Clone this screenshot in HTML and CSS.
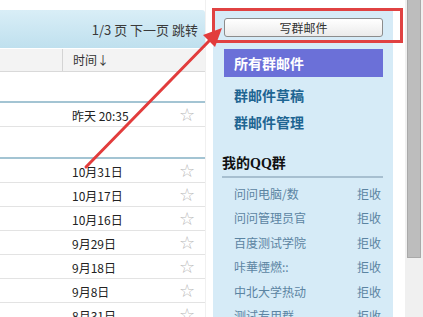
FILE: index.html
```html
<!doctype html>
<html lang="zh-CN">
<head>
    <meta charset="UTF-8" />
    <title>群邮件</title>
    <link rel="stylesheet" href="styles.css">
</head>
<body>
<div class="page">
    <div class="mail">
        <div class="pager">1/3 页 下一页 跳转</div>
        <div class="colhead">
            <span class="col-subject"></span>
            <span class="col-time">时间↓</span>
        </div>
        <div class="group">
            <div class="row"><span></span><span class="time">昨天 20:35</span><span class="star">☆</span></div>
        </div>
        <div class="group">
            <div class="row"><span></span><span class="time">10月31日</span><span class="star">☆</span></div>
            <div class="row"><span></span><span class="time">10月17日</span><span class="star">☆</span></div>
            <div class="row"><span></span><span class="time">10月16日</span><span class="star">☆</span></div>
            <div class="row"><span></span><span class="time">9月29日</span><span class="star">☆</span></div>
            <div class="row"><span></span><span class="time">9月18日</span><span class="star">☆</span></div>
            <div class="row"><span></span><span class="time">9月8日</span><span class="star">☆</span></div>
            <div class="row"><span></span><span class="time">8月31日</span><span class="star">☆</span></div>
        </div>
    </div>
    <aside class="side">
        <button type="button" class="write">写群邮件</button>
        <a class="nav nav-active">所有群邮件</a>
        <a class="nav">群邮件草稿</a>
        <a class="nav">群邮件管理</a>
        <h3 class="side-title">我的QQ群</h3>
        <ul class="groups">
            <li><span>问问电脑/数</span><span>拒收</span></li>
            <li><span>问问管理员官</span><span>拒收</span></li>
            <li><span>百度测试学院</span><span>拒收</span></li>
            <li><span>咔華煙燃::</span><span>拒收</span></li>
            <li><span>中北大学热动</span><span>拒收</span></li>
            <li><span>测试专用群</span><span>拒收</span></li>
        </ul>
    </aside>
    <div class="scroll"><div class="thumb"></div></div>

    <div class="mark"></div>
    <svg class="arrow" width="423" height="317" viewBox="0 0 423 317">
        <line x1="86" y1="167" x2="210" y2="40" stroke="#e23c3c" stroke-width="3" stroke-linecap="round" />
        <polygon points="222,28 215,47 203,35" fill="#e23c3c" />
    </svg>
</div>
</body>
</html>
```

FILE: styles.css
```css
html,body {
    margin: 0;
    padding: 0;
    background: white;
    font-family: "Noto Sans CJK SC", "Microsoft YaHei", sans-serif;
    font-size: 12px;
    color: #333;
    overflow: hidden;
}
.page {
    display: flex;
    height: 317px;
    position: relative;
}
.mail {
    width: 205px;
    padding-top: 10px;
    border-right: 1px solid #f0f0f0;
}
.pager {
    height: 38px;
    line-height: 40px;
    text-align: right;
    padding-right: 7px;
    font-size: 13px;
    color: #3a3a3a;
    background: linear-gradient(#d9eef7, #bfe0ee);
    border-top-right-radius: 3px;
}
.colhead {
    display: flex;
    margin-top: 1px;
    height: 22px;
    line-height: 22px;
    background: #f3f3f3;
    border-bottom: 1px solid #d9d9d9;
}
.col-subject {
    width: 62px;
    border-right: 1px solid #d4d4d4;
}
.col-time {
    padding-left: 10px;
}
.group {
    border-top: 2px solid #a3c4d3;
    margin-top: 29px;
}
.group + .group {
    margin-top: 30px;
}
.row {
    display: grid;
    grid-template-columns: 72px 1fr 24px;
    height: 23px;
    line-height: 25px;
    border-bottom: 1px solid #e3e3e3;
    font-size: 12px;
    color: #222;
}
.star {
    color: #b8b8b8;
    font-family: "DejaVu Sans", sans-serif;
    font-size: 18px;
    line-height: 24px;
    margin-left: -2px;
}
.side {
    width: 180px;
    margin-left: 7px;
    margin-top: 10px;
    padding: 8px 10px 0 11px;
    box-sizing: border-box;
    background: #d6ebf7;
    display: flex;
    flex-direction: column;
}
.write {
    height: 22px;
    border: 1px solid #8c8c8c;
    border-radius: 3px;
    background: linear-gradient(#ffffff, #ebebeb);
    font-family: inherit;
    font-size: 12px;
    color: #333;
    padding: 0;
}
.nav {
    height: 27px;
    line-height: 31px;
    padding-left: 10px;
    font-size: 14px;
    font-weight: bold;
    color: #1e6592;
}
.nav-active {
    margin-top: 12px;
    height: 28px;
    line-height: 28px;
    margin-bottom: 3px;
    background: #6b70d8;
    color: white;
}
.side-title {
    margin: 18px 0 0 -2px;
    padding-bottom: 4px;
    font-family: "Liberation Serif", "Noto Sans CJK SC", serif;
    font-size: 14px;
    font-weight: bold;
    color: #111;
    border-bottom: 2px solid #a7bfd0;
}
.groups {
    list-style: none;
    margin: 4px 0 0;
    padding: 0 2px 0 10px;
}
.groups li {
    display: flex;
    justify-content: space-between;
    height: 24.4px;
    line-height: 24px;
    font-size: 12px;
    color: #5b84a2;
}
.scroll {
    margin-left: 12px;
    width: 18px;
    background: #f0f0f0;
}
.thumb {
    margin: 0 2px 0 2px;
    height: 258px;
    background: #bdbdbd;
    border: 1px solid #a9a9a9;
    border-top: none;
    box-sizing: border-box;
}
.mark {
    position: absolute;
    left: 212px;
    top: 8px;
    width: 191px;
    height: 35px;
    box-sizing: border-box;
    border: 3px solid #e04242;
}
.arrow {
    position: absolute;
    left: 0;
    top: 0;
    pointer-events: none;
}
```
